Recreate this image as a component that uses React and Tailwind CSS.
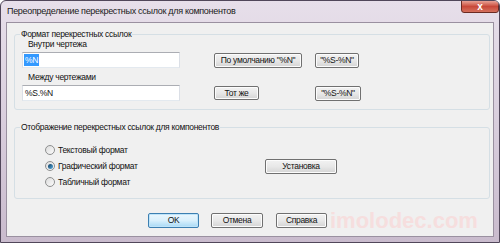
import React from "react";

function Btn({ w, h = "h-[15px]", children, def = false }) {
  return (
    <div
      className={`${w} ${h} flex items-center justify-center rounded-[2px] border text-[8.5px] leading-none text-[#111] ${
        def
          ? "border-[#3c7fb1] bg-gradient-to-b from-[#eaf6fd] via-[#d9f0fc] to-[#a7d9f5] shadow-[inset_0_0_0_1px_#bfe4f9]"
          : "border-[#707070] bg-gradient-to-b from-[#f2f2f2] via-[#e8e8e8] to-[#d4d4d4] shadow-[inset_0_0_0_1px_#fcfcfc]"
      }`}
    >
      {children}
    </div>
  );
}

function Radio({ checked, label }) {
  return (
    <div className="h-[16px] flex items-center gap-[3px]">
      <div className="w-[10px] h-[10px] rounded-full border border-[#8e8f8f] bg-gradient-to-br from-[#dcdcdc] to-[#fbfbfb] flex items-center justify-center">
        {checked && (
          <div className="w-[5px] h-[5px] rounded-full bg-gradient-to-br from-[#0d3a5e] to-[#5eb4e6]" />
        )}
      </div>
      <span className="text-[8.5px] leading-[12px] text-[#111]">{label}</span>
    </div>
  );
}

export default function App() {
  return (
    <div className="w-[500px] h-[243px] overflow-hidden rounded-t-[6px] border border-[#51475a] bg-gradient-to-b from-[#e7dfea] via-[#d9cedd] to-[#c9bbcd] font-['Liberation_Sans',Arial,sans-serif] tracking-[-0.3px]">
      {/* title bar */}
      <div className="h-[21px] flex items-start justify-between pl-[6px]">
        <span className="mt-[4px] text-[9px] leading-[12px] text-[#1a1a1a]">
          Переопределение перекрестных ссылок для компонентов
        </span>
        <div className="w-[38px] h-[13px] -mt-[1px] rounded-b-[3px] border border-[#6b2a22] bg-gradient-to-b from-[#e7a195] via-[#c8483a] to-[#d4705d] flex items-center justify-center text-white text-[10px] font-bold leading-none tracking-normal">
          x
        </div>
      </div>

      {/* client area */}
      <div className="mx-[5px] h-[215px] border border-[#9a90a0] bg-[#f0f0f0] flex flex-col">
        {/* group 1 */}
        <div className="relative ml-[7px] mt-[11px] w-[476px] h-[76px] rounded-[3px] border border-[#d5dfe5]">
          <span className="absolute left-[5px] -top-[7px] bg-[#f0f0f0] px-[1px] text-[8.5px] leading-[12px] text-[#111]">
            Формат перекрестных ссылок
          </span>
          <div className="pt-[3px]">
            <div className="pl-[13px] text-[8.5px] leading-[12px] text-[#111]">Внутри чертежа</div>
            <div className="mt-[2px] flex items-center">
              <div className="ml-[7px] w-[158px] h-[16px] border border-[#abadb3] border-b-[#e3e9ef] border-x-[#dbdfe6] bg-white flex items-center pl-[1px]">
                <span className="h-[12px] px-[1px] bg-[#3399ff] text-white text-[8.5px] leading-[12px]">%N</span>
              </div>
              <div className="ml-[34px] w-[101px]">
                <Btn w="w-[88px]">По умолчанию "%N"</Btn>
              </div>
              <Btn w="w-[44px]">"%S-%N"</Btn>
            </div>
            <div className="mt-[3px] pl-[13px] text-[8.5px] leading-[12px] text-[#111]">Между чертежами</div>
            <div className="mt-[2px] flex items-center">
              <div className="ml-[7px] w-[158px] h-[16px] border border-[#abadb3] border-b-[#e3e9ef] border-x-[#dbdfe6] bg-white flex items-center pl-[2px]">
                <span className="text-[8.5px] leading-[12px] text-[#111]">%S.%N</span>
              </div>
              <div className="ml-[34px] w-[101px]">
                <Btn w="w-[45px]" h="h-[14px]">Тот же</Btn>
              </div>
              <Btn w="w-[46px]">"%S-%N"</Btn>
            </div>
          </div>
        </div>

        {/* group 2 */}
        <div className="relative ml-[7px] mt-[17px] w-[476px] h-[72px] rounded-[3px] border border-[#d5dfe5]">
          <span className="absolute left-[5px] -top-[7px] bg-[#f0f0f0] px-[1px] text-[8.5px] leading-[12px] text-[#111]">
            Отображение перекрестных ссылок для компонентов
          </span>
          <div className="pt-[14px] pl-[30px] flex items-center">
            <div className="w-[220px] flex flex-col">
              <Radio label="Текстовый формат" />
              <Radio checked label="Графический формат" />
              <Radio label="Табличный формат" />
            </div>
            <Btn w="w-[72px]">Установка</Btn>
          </div>
        </div>

        {/* bottom buttons */}
        <div className="mt-[14px] ml-[141px] h-[15px] flex items-center">
          <Btn w="w-[51px]" def>
            OK
          </Btn>
          <div className="ml-[12px]">
            <Btn w="w-[52px]">Отмена</Btn>
          </div>
          <div className="ml-[13px]">
            <Btn w="w-[51px]">Справка</Btn>
          </div>
          <span className="ml-[3px] text-[22px] font-bold leading-[15px] text-[#f6dede] whitespace-nowrap tracking-normal">
            imolodec.com
          </span>
        </div>
      </div>
    </div>
  );
}
